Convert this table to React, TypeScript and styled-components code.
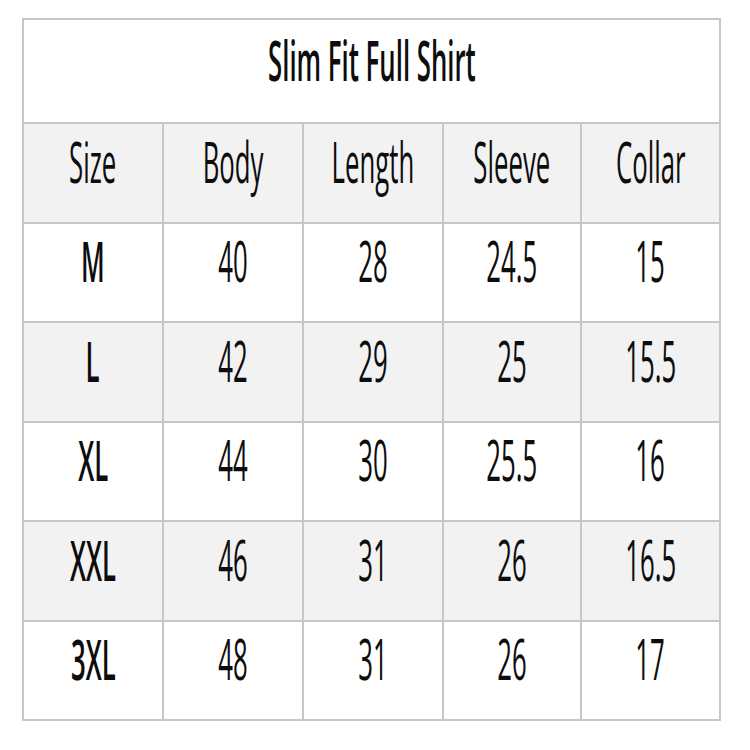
import React from "react";
import styled, { createGlobalStyle } from "styled-components";

const Global = createGlobalStyle`
  html, body { margin: 0; padding: 0; background: #ffffff; }
  body { font-family: "Open Sans", "Noto Sans", sans-serif; }
`;

const Page = styled.div`
  width: 750px;
  height: 750px;
  padding: 18px 0 0 22px;
  box-sizing: border-box;
`;

const Table = styled.div`
  width: 699px;
  height: 703px;
  box-sizing: border-box;
  display: grid;
  grid-template-columns: 138px 138px 138px 136px 137px;
  grid-template-rows: 102px repeat(6, 1fr);
  gap: 2px;
  padding: 2px;
  background: #c7c7c7;
`;

const Cell = styled.div<{ $shade?: boolean; $span?: number }>`
  background: ${(p) => (p.$shade ? "#f2f2f2" : "#ffffff")};
  grid-column: ${(p) => (p.$span ? `span ${p.$span}` : "auto")};
  display: flex;
  align-items: center;
  justify-content: center;
  padding-bottom: 24px;
  box-sizing: border-box;
  overflow: hidden;
`;

const Label = styled.span<{ $weight?: number }>`
  display: inline-block;
  font-size: 28px;
  line-height: 1;
  font-weight: ${(p) => p.$weight ?? 400};
  color: #0d0d0d;
  transform: scale(0.92, 2);
  transform-origin: center;
  white-space: nowrap;
`;

const headers = ["Size", "Body", "Length", "Sleeve", "Collar"];
const rows = [
  ["M", "40", "28", "24.5", "15"],
  ["L", "42", "29", "25", "15.5"],
  ["XL", "44", "30", "25.5", "16"],
  ["XXL", "46", "31", "26", "16.5"],
  ["3XL", "48", "31", "26", "17"],
];

export default function App() {
  return (
    <>
      <Global />
      <Page>
        <Table>
          <Cell $span={5}>
            <Label $weight={600}>Slim Fit Full Shirt</Label>
          </Cell>
          {headers.map((h) => (
            <Cell key={h} $shade>
              <Label $weight={500}>{h}</Label>
            </Cell>
          ))}
          {rows.map((r, i) =>
            r.map((v, j) => (
              <Cell key={`${i}-${j}`} $shade={i % 2 === 1}>
                <Label $weight={j === 0 ? 600 : 400}>{v}</Label>
              </Cell>
            ))
          )}
        </Table>
      </Page>
    </>
  );
}
